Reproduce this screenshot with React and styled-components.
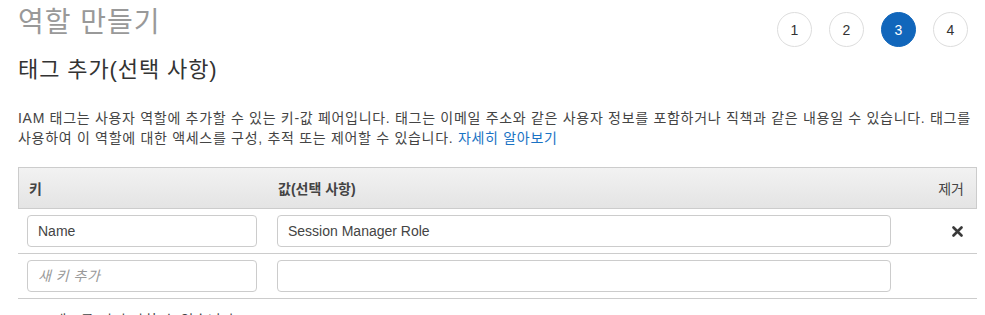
import React from "react";
import styled, { createGlobalStyle } from "styled-components";

const Global = createGlobalStyle`
  html, body { margin: 0; padding: 0; background: #fff; }
  body { font-family: "Liberation Sans", "Noto Sans CJK KR", Arial, sans-serif; color: #444; }
  * { box-sizing: border-box; }
`;

const Page = styled.div`
  padding: 0 8px 0 18px;
`;

const TopBar = styled.div`
  display: flex;
  justify-content: space-between;
  align-items: flex-start;
  height: 50px;
`;

const Title = styled.h1`
  margin: 0;
  padding-top: 5px;
  font-size: 28px;
  line-height: 36px;
  font-weight: 400;
  letter-spacing: 1px;
  color: #999;
`;

const Steps = styled.div`
  display: flex;
  gap: 17px;
  padding-top: 12px;
  padding-right: 9px;
`;

const Step = styled.div`
  width: 35px;
  height: 35px;
  border-radius: 50%;
  display: flex;
  align-items: center;
  justify-content: center;
  font-size: 14px;
  border: 1px solid ${(p) => (p.$active ? "#1166bb" : "#ddd")};
  background: ${(p) => (p.$active ? "#1166bb" : "#fff")};
  color: ${(p) => (p.$active ? "#fff" : "#333")};
`;

const SubTitle = styled.h2`
  margin: 0;
  font-size: 22px;
  line-height: 40px;
  font-weight: 400;
  letter-spacing: 0.9px;
  color: #333;
`;

const Desc = styled.p`
  margin: 18px 0 0;
  font-size: 14px;
  line-height: 20px;
  letter-spacing: 0.7px;
  color: #444;
`;

const Link = styled.a`
  color: #1a73c4;
  text-decoration: none;
`;

const Table = styled.div`
  margin-top: 19px;
  display: grid;
  grid-template-columns: 250px 1fr 86px;
`;

const HeadCell = styled.div`
  height: 42px;
  display: flex;
  align-items: center;
  justify-content: ${(p) => (p.$right ? "flex-end" : "flex-start")};
  padding: 0 ${(p) => (p.$right ? "12px" : "10px")};
  background: linear-gradient(#f2f2f2, #e4e4e4);
  border-top: 1px solid #ccc;
  border-bottom: 1px solid #ccc;
  border-left: ${(p) => (p.$first ? "1px solid #ccc" : "none")};
  border-right: ${(p) => (p.$last ? "1px solid #ccc" : "none")};
  font-size: 14px;
  font-weight: ${(p) => (p.$right ? 400 : 700)};
  color: #444;
`;

const Cell = styled.div`
  height: 45px;
  display: flex;
  align-items: center;
  justify-content: ${(p) => (p.$end ? "flex-end" : "flex-start")};
  padding: ${(p) => (p.$end ? "0 14px 0 0" : "0 0 0 9px")};
  border-bottom: 1px solid #ccc;
`;

const Input = styled.input`
  width: ${(p) => p.$w}px;
  height: 32px;
  border: 1px solid #ccc;
  border-radius: 4px;
  padding: 0 10px;
  font-family: "Liberation Sans", "Noto Sans CJK KR", Arial, sans-serif;
  font-size: 14px;
  color: #444;
  background: #fff;
  &::placeholder {
    color: #999;
    font-style: italic;
    letter-spacing: 0.5px;
  }
`;

const Remove = styled.button`
  border: none;
  background: none;
  padding: 0;
  width: 11px;
  height: 11px;
  display: flex;
  cursor: pointer;
`;

const Footer = styled.p`
  margin: 11px 0 0;
  font-size: 14px;
  line-height: 20px;
  letter-spacing: 0.7px;
  color: #444;
  padding-left: 14px;
`;

export default function App() {
  return (
    <>
      <Global />
      <Page>
        <TopBar>
          <Title>역할 만들기</Title>
          <Steps>
            <Step>1</Step>
            <Step>2</Step>
            <Step $active>3</Step>
            <Step>4</Step>
          </Steps>
        </TopBar>
        <SubTitle>태그 추가(선택 사항)</SubTitle>
        <Desc>
          IAM 태그는 사용자 역할에 추가할 수 있는 키-값 페어입니다. 태그는 이메일 주소와 같은 사용자 정보를 포함하거나 직책과 같은 내용일 수 있습니다. 태그를 사용하여 이 역할에 대한 액세스를 구성, 추적 또는 제어할 수 있습니다. <Link href="#">자세히 알아보기</Link>
        </Desc>
        <Table>
          <HeadCell $first>키</HeadCell>
          <HeadCell>값(선택 사항)</HeadCell>
          <HeadCell $right $last>제거</HeadCell>

          <Cell><Input $w={230} defaultValue="Name" /></Cell>
          <Cell><Input $w={614} defaultValue="Session Manager Role" /></Cell>
          <Cell $end>
            <Remove aria-label="제거">
              <svg width="11" height="11" viewBox="0 0 11 11">
                <path d="M1.5 1.5 L9.5 9.5 M9.5 1.5 L1.5 9.5" stroke="#3a3a3a" strokeWidth="2.6" strokeLinecap="round" />
              </svg>
            </Remove>
          </Cell>

          <Cell><Input $w={230} placeholder="새 키 추가" /></Cell>
          <Cell><Input $w={614} /></Cell>
          <Cell $end />
        </Table>
        <Footer>49 태그를 더 추가할 수 있습니다.</Footer>
      </Page>
    </>
  );
}
